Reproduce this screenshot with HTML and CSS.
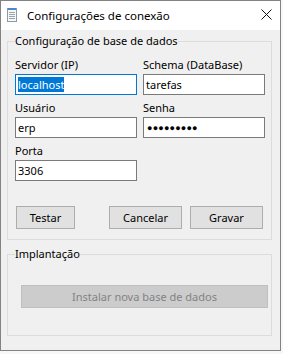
FILE: index.html
```html
<!DOCTYPE html>
<html lang="pt">
<head>
    <meta charset="UTF-8">
    <title>Configurações de conexão</title>
    <link rel="stylesheet" href="styles.css">
</head>
<body>
    <div class="window">
        <div class="titlebar">
            <svg class="app-icon" width="10" height="15" viewBox="0 0 10 15">
                <rect x="0.5" y="1.5" width="9" height="13" fill="#f5f7f9" stroke="#8e9aa6"/>
                <rect x="1" y="1" width="8" height="2" fill="#4f86c6"/>
                <line x1="2" y1="5.5" x2="8" y2="5.5" stroke="#9aa4ae"/>
                <line x1="2" y1="7.5" x2="8" y2="7.5" stroke="#9aa4ae"/>
                <line x1="2" y1="9.5" x2="8" y2="9.5" stroke="#9aa4ae"/>
                <line x1="2" y1="11.5" x2="8" y2="11.5" stroke="#9aa4ae"/>
            </svg>
            <span class="title">Configurações de conexão</span>
            <svg class="close" width="11" height="11" viewBox="0 0 11 11">
                <path d="M0.5 0.5 L10.5 10.5 M10.5 0.5 L0.5 10.5" stroke="#111" stroke-width="1"/>
            </svg>
        </div>

        <div class="client">
            <fieldset class="group group-db">
                <legend>Configuração de base de dados</legend>
                <div class="fields">
                    <div class="field">
                        <label>Servidor (IP)</label>
                        <div class="textbox focused"><span class="selected">localhost</span></div>
                    </div>
                    <div class="field">
                        <label>Schema (DataBase)</label>
                        <div class="textbox">tarefas</div>
                    </div>
                    <div class="field">
                        <label>Usuário</label>
                        <div class="textbox">erp</div>
                    </div>
                    <div class="field">
                        <label>Senha</label>
                        <div class="textbox password">&#9679;&#9679;&#9679;&#9679;&#9679;&#9679;&#9679;&#9679;&#9679;</div>
                    </div>
                    <div class="field">
                        <label>Porta</label>
                        <div class="textbox">3306</div>
                    </div>
                </div>
                <div class="actions">
                    <button class="btn btn-test">Testar</button>
                    <button class="btn btn-cancel">Cancelar</button>
                    <button class="btn">Gravar</button>
                </div>
            </fieldset>

            <fieldset class="group group-deploy">
                <legend>Implantação</legend>
                <button class="btn btn-install" disabled>Instalar nova base de dados</button>
            </fieldset>
        </div>
    </div>
</body>
</html>
```

FILE: styles.css
```css
body {
    margin: 0;
    background-color: #f7f7f7;
    font-family: "Noto Sans", sans-serif;
    font-size: 11px;
    color: #000;
}

.window {
    width: 279px;
    height: 349px;
    border: 1px solid #838383;
    background-color: #f0f0f0;
    display: flex;
    flex-direction: column;
}

.titlebar {
    height: 29px;
    background-color: #fff;
    display: flex;
    align-items: center;
    flex-shrink: 0;
}

.app-icon {
    margin: 0 0 2px 6px;
}

.title {
    margin-left: 10px;
    font-size: 11.5px;
    flex: 1;
    padding-bottom: 1px;
}

.close {
    margin-right: 8px;
    margin-bottom: 2px;
}

.client {
    flex: 1;
    display: flex;
    flex-direction: column;
}

/* Group boxes */
.group {
    border: 1px solid #dcdcdc;
    margin: 0 0 0 6px;
    width: 265px;
    box-sizing: border-box;
    padding: 0 5px 0 7px;
    min-width: 0;
}

.group legend {
    padding: 0;
    line-height: 14px;
}

.group-db {
    margin-top: 4px;
    padding-bottom: 10px;
}

.group-deploy {
    margin-top: 7px;
    padding-top: 24px;
    padding-bottom: 27px;
}

/* Fields */
.fields {
    display: grid;
    grid-template-columns: 122px 122px;
    column-gap: 6px;
    row-gap: 5px;
    padding-top: 9px;
}

.field label {
    display: block;
    line-height: 15px;
    margin-bottom: 2px;
}

.textbox {
    height: 21px;
    box-sizing: border-box;
    border: 1px solid #7a7a7a;
    background-color: #fff;
    padding: 0 2px;
    line-height: 19px;
    white-space: nowrap;
    overflow: hidden;
}

.textbox.focused {
    border-color: #0078d7;
}

.selected {
    background-color: #0078d7;
    color: #fff;
}

.password {
    font-size: 9px;
    letter-spacing: 0.2px;
    padding-left: 3px;
}

/* Buttons */
.actions {
    display: flex;
    gap: 8px;
    margin-top: 25px;
    padding-left: 1px;
}

.btn {
    font-family: inherit;
    font-size: 11px;
    color: #000;
    background-color: #e1e1e1;
    border: 1px solid #adadad;
    height: 23px;
    width: 73px;
    padding: 0;
    border-radius: 0;
}

.btn-test {
    width: 59px;
}

.btn-cancel {
    margin-left: 26px;
}

.btn-install {
    display: block;
    width: 247px;
    margin-left: 6px;
    background-color: #cccccc;
    border-color: #bfbfbf;
    color: #838383;
}
```
